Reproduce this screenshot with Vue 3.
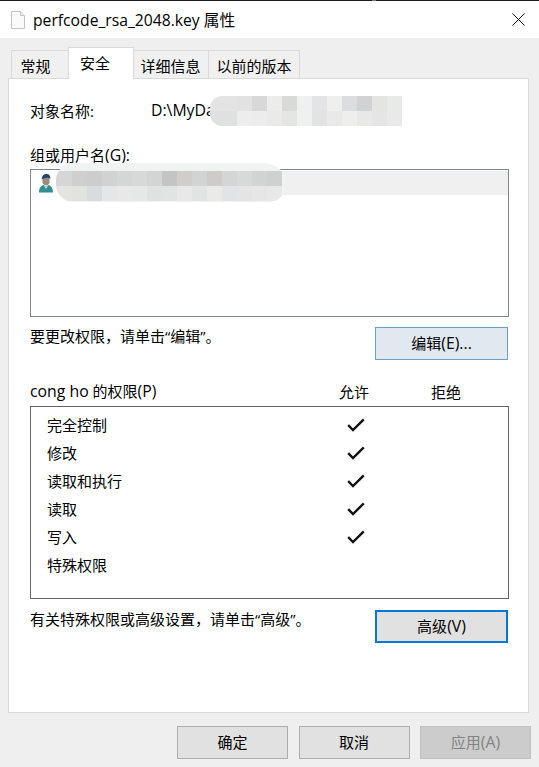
<script setup>
const tabs = [
  { label: '常规', width: 58, shift: 9 },
  { label: '安全', width: 66, shift: 12, active: true },
  { label: '详细信息', width: 76, shift: 1 },
  { label: '以前的版本', width: 92, shift: 0 },
]
const rows = [
  { name: '完全控制', allow: true },
  { name: '修改', allow: true },
  { name: '读取和执行', allow: true },
  { name: '读取', allow: true },
  { name: '写入', allow: true },
  { name: '特殊权限', allow: false },
]
const mosaicA = [
  'e4e4e4','e4e4e4','e2e2e2','d8d8d8','ececec','d9d9d8','eff0f0','e4e4e6','efefee','dcdde0','d2d2d5','e4e4e2','e8e9e9',
  'dfe1e0','dfe1e0','ededed','ececec','eaeaea','e5e5e3','eff0f0','e3e3e3','e9e9e9','eeeeec','e8e8e8','e5e5e5','e9e9e9',
]
const mosaicB = [
  'd6d6d6','cfcfcf','cdcdcd','d2d2d2','d5d6d6','d7d8d8','d3d5d5','c4c4c4','cfcecd','d2d3d3','cdcccb','d4d6d6','d8d9d9','d2d3d3','cfd1d0',
  'e4e4e2','e2e2e0','dadbdd','e6e6e6','e8e8e8','e6e7e7','e0e2e2','e2e4e4','e8e8e8','e2e3e3','eaeae8','e2e3e5','e4e4e4','e6e6e6','e8e8e8',
]
</script>

<template>
  <div class="window">
    <header class="titlebar">
      <span class="notch"></span>
      <svg class="file-icon" width="16" height="20" viewBox="0 0 16 20">
        <path d="M1.5 1.5H10.5L14.5 5.5V18.5H1.5Z" fill="#fafafa" stroke="#c4c4c4" />
        <path d="M10.5 1.5V5.5H14.5" fill="#eeeeee" stroke="#c4c4c4" />
      </svg>
      <span class="title">perfcode_rsa_2048.key 属性</span>
      <svg class="close" width="13" height="13" viewBox="0 0 13 13">
        <path d="M0.5 0.5L12.5 12.5M12.5 0.5L0.5 12.5" stroke="#111" stroke-width="1" fill="none" />
      </svg>
    </header>

    <nav class="tabs">
      <div
        v-for="tab in tabs"
        :key="tab.label"
        class="tab"
        :class="{ active: tab.active }"
        :style="{ width: tab.width + 'px', paddingRight: tab.shift + 'px' }"
      >{{ tab.label }}</div>
    </nav>

    <main class="panel">
      <div class="object-row">
        <span class="object-label">对象名称:</span>
        <span class="lat">D:\MyDa</span>
        <div class="mosaic mosaic-a">
          <i v-for="(c, i) in mosaicA" :key="i" :style="{ background: '#' + c }"></i>
        </div>
      </div>

      <div class="group-label">组或用户名<span class="lat">(G):</span></div>
      <div class="listbox">
        <div class="list-row">
          <svg class="user" width="16" height="20" viewBox="0 0 16 20">
            <path d="M1 19.5C1 15 3 12.8 5.5 12L8 13.5L10.5 12C13 12.8 15 15 15 19.5Z" fill="#2f8f8e" />
            <path d="M6 12.5L8 16L10 12.5L8 13.5Z" fill="#d8e8e8" />
            <ellipse cx="8" cy="8" rx="3.6" ry="4.4" fill="#9a8b80" />
            <path d="M3.8 6.5C3.6 2.8 6 1 8.6 1C11.2 1 12.6 2.8 12.2 6C11 4.8 9 4.6 7.5 5C5.8 5.4 4.8 5.8 3.8 6.5Z" fill="#27445c" />
          </svg>
        </div>
      </div>
      <div class="mosaic-shell">
        <div class="mosaic mosaic-b">
          <i v-for="(c, i) in mosaicB" :key="i" :style="{ background: '#' + c }"></i>
        </div>
      </div>

      <div class="action-row edit-row">
        <span class="hint">要更改权限，请单击“编辑”。</span>
        <button class="btn edit">编辑<span class="lat">(E)...</span></button>
      </div>

      <div class="perm-head">
        <span class="perm-name"><span class="lat">cong ho</span> 的权限<span class="lat">(P)</span></span>
        <span class="col">允许</span>
        <span class="col">拒绝</span>
      </div>
      <div class="permbox">
        <div v-for="row in rows" :key="row.name" class="perm-row">
          <span class="perm-label">{{ row.name }}</span>
          <svg v-if="row.allow" class="check" width="18" height="14" viewBox="0 0 18 14">
            <path d="M1.2 7.2L6 12L16.8 1.4" stroke="#111" stroke-width="2.4" fill="none" />
          </svg>
        </div>
      </div>

      <div class="action-row adv-row">
        <span class="hint">有关特殊权限或高级设置，请单击“高级”。</span>
        <button class="btn adv">高级<span class="lat">(V)</span></button>
      </div>
    </main>

    <footer class="footer">
      <button class="btn foot">确定</button>
      <button class="btn foot">取消</button>
      <button class="btn foot off">应用<span class="lat">(A)</span></button>
    </footer>
  </div>
</template>

<style>
html, body { margin: 0; background: #efefef; }
</style>

<style scoped>
.window {
  position: relative;
  width: 539px;
  height: 767px;
  overflow: hidden;
  background: #efefef;
  color: #000;
  font-family: "Open Sans", "Noto Sans CJK SC", sans-serif;
  font-size: 15px;
}
.lat { font-size: 15.8px; }
.titlebar {
  position: relative;
  box-sizing: border-box;
  height: 38px;
  display: flex;
  align-items: center;
  padding: 0 14px 0 10px;
  background: #fff;
  border-top: 1px solid #1c1c1c;
}
.notch {
  position: absolute;
  top: -1px;
  left: 372px;
  width: 4px;
  height: 1px;
  background: #777;
}
.file-icon { flex: none; }
.title {
  margin-left: 7px;
  font-size: 15.7px;
  flex: 1;
}
.close { flex: none; }
.tabs {
  display: flex;
  align-items: flex-end;
  height: 40px;
  padding-left: 11px;
}
.tab {
  box-sizing: border-box;
  height: 28px;
  display: flex;
  align-items: center;
  justify-content: center;
  margin-right: -1px;
  padding-top: 2px;
  background: #f0f0f0;
  border: 1px solid #d9d9d9;
  border-bottom: none;
}
.tab.active {
  position: relative;
  z-index: 2;
  height: 32px;
  margin-bottom: -1px;
  padding-top: 0;
  padding-bottom: 2px;
  background: #fff;
}
.panel {
  position: relative;
  box-sizing: border-box;
  width: 521px;
  height: 635px;
  margin-left: 8px;
  padding: 0 20px 0 21px;
  background: #fff;
  border: 1px solid #d9d9d9;
}
.object-row {
  position: relative;
  height: 22px;
  margin-top: 20px;
  display: flex;
  align-items: center;
}
.object-label { width: 121px; }
.mosaic { display: grid; position: absolute; }
.mosaic i { display: block; }
.mosaic-a {
  left: 180px;
  top: -3px;
  grid-template-columns: 12px repeat(12, 15px);
  grid-auto-rows: 15px;
  border-radius: 12px 0 0 12px;
  overflow: hidden;
}
.group-label {
  margin-top: 23px;
  height: 22px;
  line-height: 22px;
}
.listbox {
  box-sizing: border-box;
  width: 479px;
  height: 148px;
  margin-top: 3px;
  border: 1px solid #82878f;
}
.list-row {
  height: 24px;
  margin-top: 1px;
  background: linear-gradient(to right, transparent 251px, #f0f0f0 251px);
  padding-left: 7px;
}
.user { display: block; padding-top: 2px; }
.mosaic-shell {
  position: absolute;
  left: 47px;
  top: 84px;
  box-sizing: border-box;
  width: 230px;
  height: 39px;
  padding: 8px 0 0 0;
  background: #f1f2f2;
  border-radius: 18px 22px 18px 18px;
  overflow: hidden;
}
.mosaic-b {
  position: static;
  grid-template-columns: 16px repeat(14, 15px);
  grid-auto-rows: 15px;
}
.action-row {
  display: flex;
  justify-content: space-between;
  align-items: flex-start;
}
.edit-row { margin-top: 10px; height: 33px; }
.adv-row { margin-top: 11px; height: 33px; }
.hint { line-height: 19px; }
.btn {
  box-sizing: border-box;
  margin: 0;
  padding: 0 0 2px;
  width: 133px;
  height: 33px;
  font: inherit;
  color: #000;
  background: #e1e1e1;
  border: 1px solid #adadad;
}
.btn.edit {
  background: #e1e8ef;
  border-color: #6a9fca;
}
.btn.adv { border: 2px solid #0078d7; }
.perm-head {
  display: flex;
  align-items: center;
  height: 22px;
  margin-top: 20px;
}
.perm-name { width: 278px; }
.col { width: 92px; text-align: center; }
.permbox {
  box-sizing: border-box;
  width: 479px;
  height: 193px;
  margin-top: 4px;
  padding: 4px 0 0 16px;
  border: 1px solid #666;
}
.perm-row {
  display: flex;
  align-items: center;
  height: 28px;
}
.perm-label { width: 300px; padding-bottom: 2px; }
.footer {
  display: flex;
  gap: 10.5px;
  padding: 13px 0 0 177px;
}
.btn.foot { width: 111px; }
.btn.off {
  color: #838383;
  background: #cccccc;
  border-color: #bfbfbf;
}
</style>
